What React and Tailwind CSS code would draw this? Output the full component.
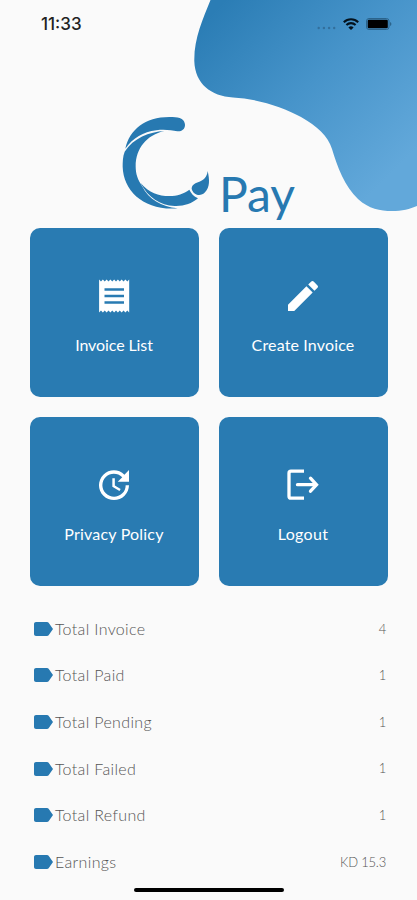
import React from 'react';
import { MdCreate, MdLabel, MdUpdate } from 'react-icons/md';

const tiles = [
  { label: 'Invoice List', icon: <ReceiptIcon />, spacing: '-tracking-[0.1px]' },
  { label: 'Create Invoice', icon: <MdCreate size={40} />, spacing: 'tracking-[0.15px]' },
  { label: 'Privacy Policy', icon: <MdUpdate size={40} />, spacing: 'tracking-[0.2px]' },
  { label: 'Logout', icon: <LogoutIcon />, spacing: 'tracking-[0.3px]' },
];

const totals = [
  { label: 'Total Invoice', value: '4' },
  { label: 'Total Paid', value: '1' },
  { label: 'Total Pending', value: '1' },
  { label: 'Total Failed', value: '1' },
  { label: 'Total Refund', value: '1' },
  { label: 'Earnings', value: 'KD 15.3' },
];

export default function App() {
  return (
    <div className="relative flex h-[900px] w-[417px] flex-col overflow-hidden bg-[#fafafa] font-['Lato',sans-serif]">
      <Blob />
      <StatusBar />

      <div className="relative flex h-[180.4px] pl-[110px]">
        <Logo />
        <span className="pt-[117px] pl-[9px] text-[48px] leading-[58px] text-[#2779b1]">Pay</span>
      </div>

      <div className="relative grid grid-cols-[169px_169px] gap-x-5 gap-y-5 pl-[29.5px]">
        {tiles.map((t) => (
          <button
            key={t.label}
            className="flex h-[168.6px] flex-col items-center rounded-[10px] bg-[#297bb2] pt-[48px] text-white"
          >
            {t.icon}
            <span className={`mt-[19px] text-[16px] leading-5 ${t.spacing}`}>{t.label}</span>
          </button>
        ))}
      </div>

      <ul className="mt-[20px] pr-[31px] pl-[31px]">
        {totals.map((row) => (
          <li key={row.label} className="flex h-[46.6px] items-center text-[#555]">
            <MdLabel size={24} className="text-[#2779b1]" />
            <span className="flex-1 text-[16px] font-light tracking-[0.35px]">{row.label}</span>
            <span className="pt-px text-[13px] font-light tracking-[-0.2px]">{row.value}</span>
          </li>
        ))}
      </ul>

      <div className="absolute bottom-[8px] left-[134px] h-[4.5px] w-[150px] rounded-full bg-black" />
    </div>
  );
}

function StatusBar() {
  return (
    <div className="relative flex h-12 items-center justify-between pr-[25px] pl-[41px]">
      <span className="pt-[2px] font-['Inter',sans-serif] text-[17px] font-medium text-[#222]">11:33</span>
      <div className="flex items-center">
        <svg width="19" height="4" viewBox="0 0 19 4" className="mt-[8px] mr-[7px]" fill="#326f9c">
          <circle cx="1.7" cy="2" r="1.2" />
          <circle cx="6.9" cy="2" r="1.2" />
          <circle cx="12.1" cy="2" r="1.2" />
          <circle cx="17.2" cy="2" r="1.2" />
        </svg>
        <svg width="16" height="12" viewBox="0 0 16 12" className="mr-[7px]" fill="none" stroke="#04121d" strokeWidth="2.1">
          <path d="M.8 4.2a10.4 10.4 0 0 1 14.4 0" />
          <path d="M3.4 7a6.7 6.7 0 0 1 9.2 0" />
          <path d="M8 12 5.4 9.4a3.8 3.8 0 0 1 5.2 0z" fill="#04121d" stroke="none" />
        </svg>
        <svg width="26" height="12" viewBox="0 0 26 12">
          <rect x=".5" y=".5" width="22.5" height="11" rx="2.5" fill="none" stroke="#2b648c" />
          <rect x="1.7" y="1.7" width="20.1" height="8.6" rx="1.2" fill="#000" />
          <path d="M24 4v4c1.9-.8 1.9-3.2 0-4z" fill="#2b648c" />
        </svg>
      </div>
    </div>
  );
}

function Blob() {
  return (
    <svg width="227" height="212" viewBox="190 0 227 212" className="absolute top-0 right-0">
      <defs>
        <linearGradient id="blob" gradientUnits="userSpaceOnUse" x1="215" y1="10" x2="385" y2="180">
          <stop offset="0" stopColor="#2b7db5" />
          <stop offset="0.5" stopColor="#4794ca" />
          <stop offset="1" stopColor="#62a8da" />
        </linearGradient>
      </defs>
      <path
        d="M210.5 0C203 19 194 38 194.3 61C195 84 211 96 233 97.5C256 98.5 283 107 301 117C317 126 328 136 332 149C337 166 345 187 358 199C369 209 380 211 392 211C402 211 410 209 417 206V0Z"
        fill="url(#blob)"
      />
    </svg>
  );
}

// Paint brush bent into the letter C
function Logo() {
  return (
    <svg width="100" height="110" viewBox="0 0 300 330" className="mt-[57px] shrink-0" fill="#2779b1">
      <path d="M46 131C58 75 105 36 178 36C192 36 201 37 209 39C218 42 225 50 225 60C225 72 216 80 202 79C184 77 167 72 139 76C99 81 70 98 46 131Z" />
      <path d="M163 78C118 81 70 99 44 140C38 155 38 171 38 185C40 259 104 318 203 310C154 305 116 283 96 243C83 224 77 207 77 184C77 130 110 90 163 78Z" />
      <path d="M91 233C118 264 145 273 178 273C202 273 221 266 238 254C243 265 251 274 264 280C245 296 222 304 194 303C150 301 115 278 91 233Z" />
      <path d="M293 198C299 224 300 246 285 262C279 269 268 272 261 269C252 266 247 260 245 252C245 241 253 236 264 232C281 226 291 216 293 198Z" />
    </svg>
  );
}

function ReceiptIcon() {
  return (
    <svg width="40" height="40" viewBox="0 0 40 40">
      <path
        d="M5 3.5l2 2 2-2 2 2 2-2 2 2 2-2 2 2 2-2 2 2 2-2 2 2 2-2 2 2 2-2 2 2 2-2V36.5l-2-2-2 2-2-2-2 2-2-2-2 2-2-2-2 2-2-2-2 2-2-2-2 2-2-2-2 2-2-2-2 2z"
        fill="currentColor"
        transform="translate(.4 0) scale(.94 1)"
      />
      <path d="M10.5 13.5h19.5M10.5 20h19.5M10.5 26.5h19.5" stroke="#297bb2" strokeWidth="2.7" />
    </svg>
  );
}

function LogoutIcon() {
  return (
    <svg width="40" height="40" viewBox="0 0 40 40" fill="none" stroke="currentColor" strokeWidth="3.3">
      <path d="M21 6.2H8a2 2 0 0 0-2 2v23a2 2 0 0 0 2 2h13" />
      <path d="M14.5 19.7h18" strokeLinecap="round" />
      <path d="m27.5 13.2 6 6.5-6 6.5" strokeLinecap="round" />
    </svg>
  );
}
